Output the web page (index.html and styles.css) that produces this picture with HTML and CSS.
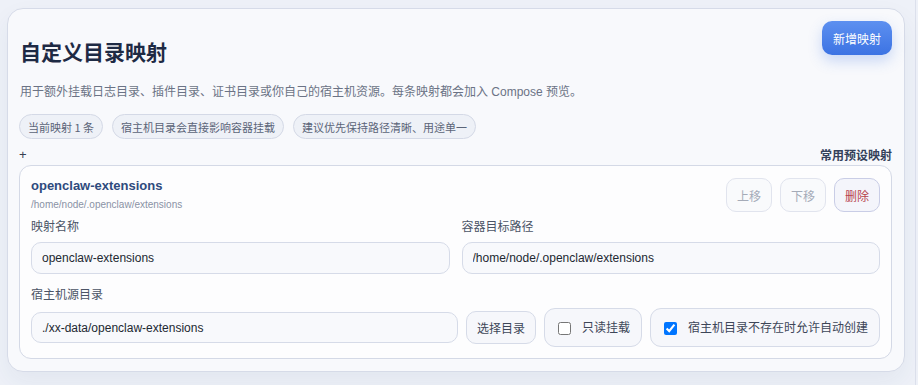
FILE: index.html
```html
<!DOCTYPE html>
<html lang="zh-CN">
<head>
<meta charset="utf-8">
<title>自定义目录映射</title>
<link rel="stylesheet" href="styles.css">
</head>
<body>
<div class="page">
  <section class="panel">
    <div class="panel-head">
      <div class="panel-intro">
        <h2 class="panel-title">自定义目录映射</h2>
        <p class="panel-desc">用于额外挂载日志目录、插件目录、证书目录或你自己的宿主机资源。每条映射都会加入 Compose 预览。</p>
        <div class="chips">
          <span class="chip">当前映射 1 条</span>
          <span class="chip">宿主机目录会直接影响容器挂载</span>
          <span class="chip">建议优先保持路径清晰、用途单一</span>
        </div>
      </div>
      <button class="btn-primary" type="button">新增映射</button>
    </div>

    <div class="preset-row">
      <span class="plus">+</span>
      <span class="preset-title">常用预设映射</span>
    </div>

    <div class="mapping">
      <div class="mapping-head">
        <div class="mapping-info">
          <div class="mapping-name">openclaw-extensions</div>
          <div class="mapping-path">/home/node/.openclaw/extensions</div>
        </div>
        <div class="mapping-actions">
          <button class="btn-small is-disabled" type="button">上移</button>
          <button class="btn-small is-disabled" type="button">下移</button>
          <button class="btn-small is-danger" type="button">删除</button>
        </div>
      </div>

      <div class="field-grid">
        <div class="field">
          <label class="field-label">映射名称</label>
          <input class="field-input" type="text" value="openclaw-extensions">
        </div>
        <div class="field">
          <label class="field-label">容器目标路径</label>
          <input class="field-input" type="text" value="/home/node/.openclaw/extensions">
        </div>
      </div>

      <div class="field field-source">
        <label class="field-label">宿主机源目录</label>
        <div class="source-row">
          <input class="field-input source-input" type="text" value="./xx-data/openclaw-extensions">
          <button class="btn-pick" type="button">选择目录</button>
          <label class="check-box"><input type="checkbox"><span>只读挂载</span></label>
          <label class="check-box"><input type="checkbox" checked><span>宿主机目录不存在时允许自动创建</span></label>
        </div>
      </div>
    </div>
  </section>
</div>
</body>
</html>
```

FILE: styles.css
```css
* {
  box-sizing: border-box;
}

html {
  background: #eef1f8;
}

body {
  margin: 0;
  font-family: "Liberation Sans", "Noto Sans CJK SC", sans-serif;
  color: #1f2937;
  background: #eef1f8;
}

.page {
  width: 916px;
  min-height: 385px;
  padding: 8px 11px 0 7px;
  border-right: 1px solid #dce0ec;
}

.panel {
  width: 898px;
  background: #f8f9fc;
  border: 1px solid #d6dbe8;
  border-radius: 16px;
  padding: 12px 12px 12px 11px;
  box-shadow: 0 10px 24px rgba(40, 60, 110, 0.06);
}

.panel-head {
  display: flex;
  justify-content: space-between;
  align-items: flex-start;
}

.panel-title {
  margin: 16px 0 0 1px;
  font-size: 21px;
  line-height: 28px;
  font-weight: 700;
  color: #1e2a44;
  font-family: "Noto Sans CJK SC", sans-serif;
}

.panel-desc {
  margin: 18px 0 0 1px;
  font-size: 12px;
  line-height: 18px;
  color: #6b7385;
}

.chips {
  display: flex;
  gap: 9px;
  margin-top: 13px;
}

.chip {
  display: inline-flex;
  align-items: center;
  height: 25px;
  padding: 0 8px;
  font-size: 11px;
  color: #5b6478;
  background: #eef1f7;
  border: 1px solid #d4d9e6;
  border-radius: 13px;
  font-family: "Noto Sans CJK SC", sans-serif;
}

.btn-primary {
  height: 34px;
  padding: 0 11px;
  border: none;
  border-radius: 10px;
  background: linear-gradient(180deg, #5d90f0 0%, #3c73e3 100%);
  color: #ffffff;
  font-size: 12px;
  font-family: "Noto Sans CJK SC", sans-serif;
  box-shadow: 0 6px 14px rgba(60, 115, 227, 0.25);
}

.preset-row {
  display: flex;
  justify-content: space-between;
  align-items: center;
  margin-top: 8px;
  height: 16px;
  line-height: 16px;
}

.plus {
  font-size: 13px;
  color: #374151;
}

.preset-title {
  font-size: 12px;
  font-weight: 700;
  color: #34415a;
  font-family: "Noto Sans CJK SC", sans-serif;
}

.mapping {
  margin-top: 2px;
  background: #fdfdfe;
  border: 1px solid #d4d9e6;
  border-radius: 12px;
  padding: 12px 11px 11px 11px;
}

.mapping-head {
  display: flex;
  justify-content: space-between;
  align-items: flex-start;
}

.mapping-name {
  font-size: 13px;
  line-height: 16px;
  font-weight: 700;
  color: #2e4a7d;
}

.mapping-path {
  margin-top: 4px;
  font-size: 10px;
  line-height: 14px;
  color: #8a92a5;
}

.mapping-actions {
  display: flex;
  gap: 8px;
}

.btn-small {
  height: 34px;
  padding: 0 10px;
  border-radius: 10px;
  font-size: 12px;
  font-family: "Noto Sans CJK SC", sans-serif;
  background: #f9fafc;
  border: 1px solid #e1e4ee;
}

.btn-small.is-disabled {
  color: #a5abb8;
}

.btn-small.is-danger {
  color: #b7434c;
  background: #f4f5fb;
  border-color: #c9cde6;
}

.field-grid {
  display: grid;
  grid-template-columns: 1fr 1fr;
  gap: 12px;
  margin-top: 6px;
}

.field {
  display: flex;
  flex-direction: column;
}

.field-label {
  font-size: 12px;
  line-height: 16px;
  color: #4b5466;
  margin-bottom: 8px;
  font-family: "Noto Sans CJK SC", sans-serif;
}

.field-input {
  height: 32px;
  padding: 0 10px;
  border: 1px solid #d6dbe8;
  border-radius: 10px;
  background: #f8f9fc;
  font-family: "Liberation Sans", "Noto Sans CJK SC", sans-serif;
  font-size: 12px;
  color: #222831;
}

.field-source {
  margin-top: 12px;
}

.field-source .field-label {
  margin-bottom: 6px;
}

.source-row {
  display: flex;
  align-items: center;
  gap: 8px;
}

.source-input {
  flex: 1;
  height: 31px;
  min-width: 0;
}

.btn-pick {
  height: 33px;
  padding: 0 10px;
  border: 1px solid #d6dbe8;
  border-radius: 10px;
  background: #f6f7fb;
  color: #3d4658;
  font-size: 12px;
  font-family: "Noto Sans CJK SC", sans-serif;
}

.check-box {
  display: flex;
  align-items: center;
  gap: 11px;
  height: 39px;
  padding: 0 11px 0 13px;
  border: 1px solid #d6dbe8;
  border-radius: 11px;
  background: #f6f7fb;
  font-size: 12px;
  color: #3d4658;
  font-family: "Noto Sans CJK SC", sans-serif;
}

.check-box input {
  margin: 2px 0 0 0;
  width: 13px;
  height: 13px;
}

.check-box span {
  margin-top: -2px;
}
```
